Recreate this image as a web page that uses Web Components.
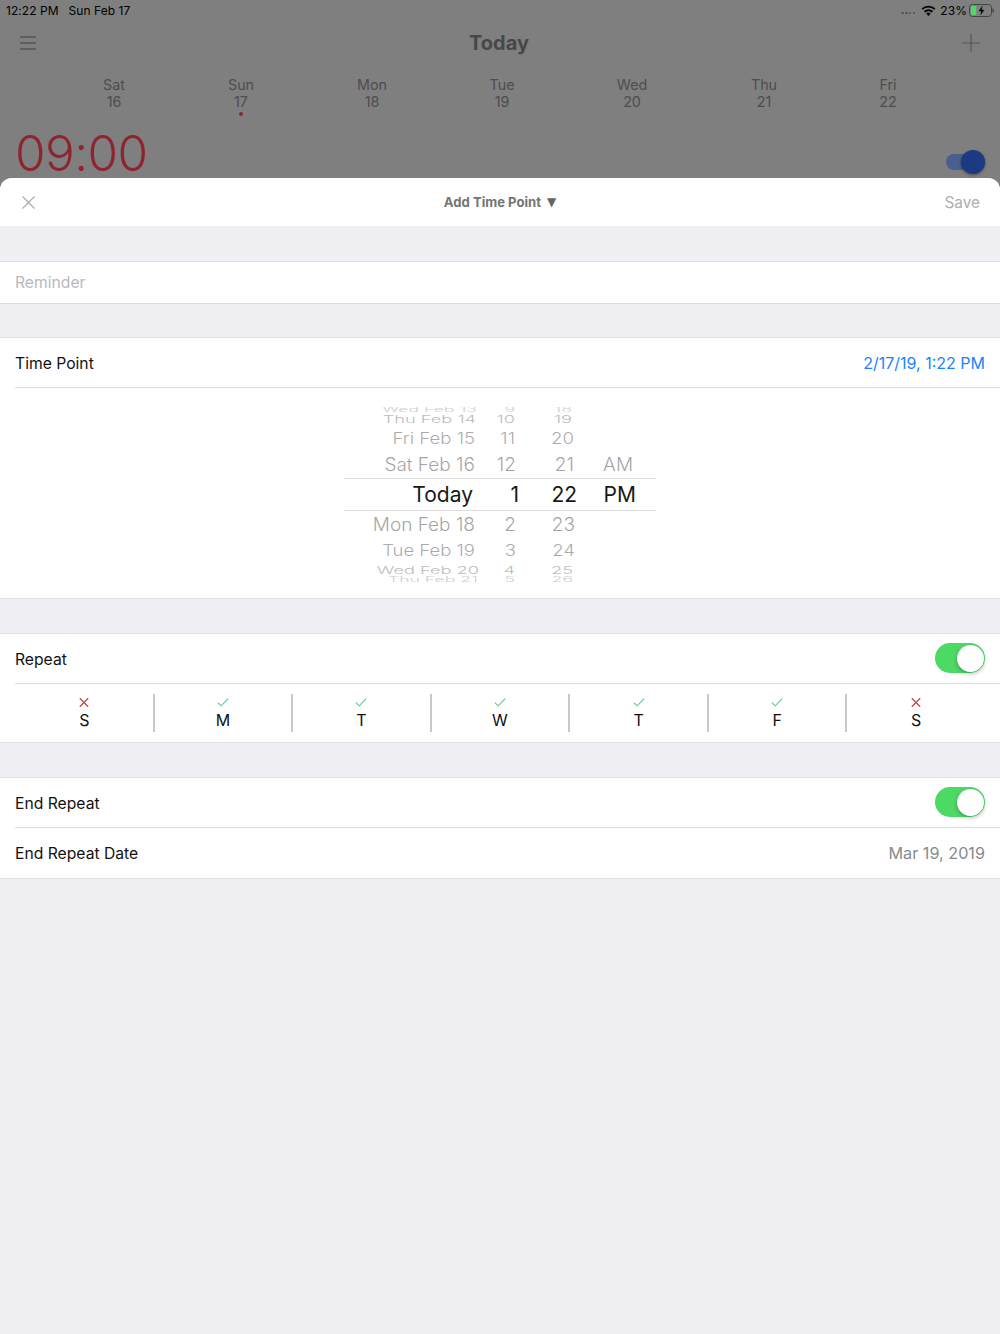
<!DOCTYPE html>
<html lang="en">
<head>
<meta charset="utf-8">
<title>Add Time Point</title>
<style>
html,body{margin:0;padding:0;background:#efeff4;}
body{font-family:Inter,"Liberation Sans",sans-serif;color:#000;}
</style>
</head>
<body>
<app-shell></app-shell>
<script>
function def(name, css, html){
  customElements.define(name, class extends HTMLElement{
    constructor(){super();const s=this.attachShadow({mode:'open'});
      s.innerHTML='<style>'+css+'</style>'+(typeof html==='function'?html(this):html);}
  });
}
def('status-bar',`
:host{display:flex;height:20px;align-items:center;padding:0 6px;font-size:12px;color:#000;letter-spacing:.05px}
.l{display:flex;gap:10px;flex:1}
.r{display:flex;align-items:center}
.d{margin-right:6px;display:flex;gap:1.3px;padding-top:6px}
.d i{width:2.6px;height:2.6px;background:#555;border-radius:50%}
.p{margin:0 2px 0 4px}
svg{display:block}
`,`<div class="l"><span>12:22 PM</span><span>Sun Feb 17</span></div>
<div class="r"><div class="d"><i></i><i></i><i></i><i></i></div>
<svg width="15" height="11" viewBox="0 0 15 11"><path d="M7.5 11 5.3 8.6a3.2 3.2 0 0 1 4.4 0Z" fill="#000"/><path d="M3.6 6.8a5.7 5.7 0 0 1 7.8 0M1.2 4.1a9.2 9.2 0 0 1 12.6 0" fill="none" stroke="#000" stroke-width="1.9"/></svg>
<span class="p">23%</span>
<svg width="25" height="13" viewBox="0 0 25 13"><rect x=".5" y=".5" width="22" height="12" rx="3" fill="none" stroke="#444"/><rect x="2" y="2" width="5.2" height="9" rx="1" fill="#4cd964"/><rect x="23.4" y="4.5" width="1.3" height="4" rx=".6" fill="#444"/><path d="M13.6 1.5 9.6 7.2h2.6l-.8 4.3 4-5.7h-2.6Z" fill="#000"/></svg></div>`);
def('week-col',`:host{display:flex;flex-direction:column;align-items:center;font-size:14.3px;line-height:17px;color:#4d4d4d;position:relative}
i{position:absolute;top:36px;width:4px;height:4px;border-radius:50%;background:#8e2430}`,
e=>`<span>${e.getAttribute('d')}</span><span>${e.getAttribute('n')}</span>${e.hasAttribute('dot')?'<i></i>':''}`);
def('today-backdrop',`
:host{display:block;height:178px;background:#7f7f7f;overflow:hidden}
nav{display:flex;align-items:center;justify-content:space-between;height:46px;padding:0 20px}
h1{margin:0;font-size:20px;font-weight:700;color:#474747}
.week{display:grid;grid-template-columns:128px 126px 136px 124px 136px 128px 120px;padding:10px 0 0 50px;height:35px;margin-bottom:17px}
.t{display:flex;justify-content:space-between;align-items:flex-start;padding:0 15px}
.time{font-size:49.5px;font-weight:300;line-height:50px;color:#8e2430;letter-spacing:-.6px}
.tg{position:relative;width:39px;height:16px;border-radius:8px;background:#4a5f8d;margin-top:26px}
.tg i{position:absolute;right:0;top:-4px;width:24px;height:24px;border-radius:50%;background:#1c3a83;box-shadow:0 1px 3px rgba(0,0,0,.4)}
svg{display:block}
`,`<status-bar></status-bar>
<nav><svg width="16" height="14" viewBox="0 0 16 14"><path d="M0 1h16M0 7h16M0 13h16" stroke="#565656" stroke-width="1.3"/></svg>
<h1>Today</h1>
<svg width="18" height="18" viewBox="0 0 18 18"><path d="M9 0v18M0 9h18" stroke="#565656" stroke-width="1.2"/></svg></nav>
<div class="week"><week-col d="Sat" n="16"></week-col><week-col d="Sun" n="17" dot></week-col><week-col d="Mon" n="18"></week-col><week-col d="Tue" n="19"></week-col><week-col d="Wed" n="20"></week-col><week-col d="Thu" n="21"></week-col><week-col d="Fri" n="22"></week-col></div>
<div class="t"><div class="time">09:00</div><div class="tg"><i></i></div></div>`);
def('sheet-header',`
:host{display:flex;height:48px;align-items:center;justify-content:space-between;background:#fff;padding:0 20px 0 22px;position:relative}
.c{position:absolute;left:0;right:0;text-align:center;font-size:13.1px;font-weight:700;color:#757575;display:flex;justify-content:center;align-items:center;gap:6px}
.c span:last-child{font-family:"DejaVu Sans",sans-serif;font-size:12px;font-weight:400;color:#666}
.s{font-size:15.4px;color:#aeaeae}
svg{display:block}
`,`<svg width="13" height="13" viewBox="0 0 13 13"><path d="M.5.5l12 12M12.5.5l-12 12" stroke="#ababab" stroke-width="1.2"/></svg>
<div class="c"><span>Add Time Point</span><span>▼</span></div><div class="s">Save</div>`);
def('form-section',`:host{display:block;background:#fff;border-top:1px solid #dfdfe3;border-bottom:1px solid #dfdfe3;margin-top:34px}`,`<slot></slot>`);
def('form-row',`
:host{display:flex;align-items:center;justify-content:space-between;padding:0 15px;font-size:15.7px;color:#111;position:relative;box-sizing:border-box}
:host([line])::after{content:"";position:absolute;left:15px;right:0;bottom:0;height:1px;background:#dfdfe3}
`,`<slot></slot><slot name="end"></slot>`);
def('ios-switch',`
:host{display:block;width:50px;height:30px;border-radius:15px;background:#4cd964;position:relative;margin-bottom:2px}
i{position:absolute;right:1.5px;top:1.5px;width:27px;height:27px;border-radius:50%;background:#fff;box-shadow:0 2px 4px rgba(0,0,0,.25)}
`,`<i></i>`);
const rows=[
 {h:6,sy:.4,f:17.6,o:.2,d:['Wed Feb 13',4],c:[['9',5],['18',8],null]},
 {h:13,sy:.58,f:18.2,o:.27,d:['Thu Feb 14',5],c:[['10',5],['19',8],null]},
 {h:24,sy:.84,f:18.6,o:.33,d:['Fri Feb 15',6],c:[['11',5],['20',6],null]},
 {h:28,sy:.96,f:19,o:.36,d:['Sat Feb 16',6],c:[['12',4],['21',6],['AM',23]]},
 {h:33,sy:1,f:21,o:.9,sel:1,d:['Today',8],c:[['1',1],['22',3],['PM',20]]},
 {h:27,sy:.96,f:19,o:.36,d:['Mon Feb 18',6],c:[['2',4],['23',5],null]},
 {h:25,sy:.84,f:18.5,o:.33,d:['Tue Feb 19',6],c:[['3',4],['24',5],null]},
 {h:14,sy:.58,f:18.2,o:.27,d:['Wed Feb 20',2],c:[['4',5],['25',7],null]},
 {h:5,sy:.4,f:17.6,o:.2,d:['Thu Feb 21',3],c:[['5',5],['26',7],null]}
];
def('picker-wheel',`
:host{display:block;height:210px;box-sizing:border-box;padding-top:19px;background:#fff}
.w{width:312px;margin-left:344px;display:flex;flex-direction:column;overflow:hidden}
.r{display:grid;grid-template-columns:137px 39px 60px 76px;grid-template-rows:minmax(0,1fr);align-items:center;color:#000;white-space:nowrap;flex:none}
.r>span{display:block;text-align:right;line-height:1}
.r>span.t{font-weight:300}
.r.sel{border-top:1px solid #dcdcdc;border-bottom:1px solid #dcdcdc;box-sizing:border-box}
.r.sel>span{font-weight:400}
`,()=>`<div class="w">`+rows.map(r=>{
  const st=`transform:scaleY(${r.sy});opacity:${r.o};font-size:${r.f}px;`;
  const cell=c=>c?`<span class="t" style="${st}padding-right:${c[1]}px">${c[0]}</span>`:'<span></span>';
  return `<div class="r${r.sel?' sel':''}" style="height:${r.h}px">${cell(r.d)}${r.c.map(cell).join('')}</div>`;
}).join('')+`</div>`);
def('day-cell',`
:host{display:flex;flex-direction:column;align-items:center;height:38px;font-size:16px;line-height:18px;color:#111;border-right:2px solid #c9c9c9;margin:10px -1px 10px 0;padding-left:1px}
:host([last]){border-right:0;margin-right:0}
svg{display:block;margin:3px 0 3px}
`,e=>{const ok=e.hasAttribute('ok');return (ok?`<svg width="12" height="11" viewBox="0 0 12 11"><path d="M.8 5.6l3.4 3.2L11.2 1.6" fill="none" stroke="#5ac88a" stroke-width="1.1"/></svg>`:`<svg width="12" height="11" viewBox="0 0 12 11"><path d="M1.8 1.2l8.4 8.6M10.2 1.2L1.8 9.8" fill="none" stroke="#c8474f" stroke-width="1.3"/></svg>`)+`<span>${e.getAttribute('l')}</span>`});
def('day-strip',`:host{display:grid;grid-template-columns:repeat(7,1fr);margin:0 15px;height:58px}`,
`<day-cell l="S"></day-cell><day-cell l="M" ok></day-cell><day-cell l="T" ok></day-cell><day-cell l="W" ok></day-cell><day-cell l="T" ok></day-cell><day-cell l="F" ok></day-cell><day-cell l="S" last></day-cell>`);
def('app-shell',`
:host{display:block;width:1000px;height:1334px;background:#7f7f7f;overflow:hidden}
.sheet{background:#efeff4;height:1156px;border-radius:12px 12px 0 0;overflow:hidden;display:flow-root}
.ph{color:#b9b9bd}
.blue{color:#1a84ff;font-size:16px}
.gray{color:#8a8a8e;font-size:16.2px}
`,`<today-backdrop></today-backdrop>
<div class="sheet"><sheet-header></sheet-header>
<form-section style="margin-top:35px"><form-row style="height:41px"><span class="ph">Reminder</span></form-row></form-section>
<form-section style="margin-top:33px"><form-row line style="height:50px">Time Point<span slot="end" class="blue">2/17/19, 1:22 PM</span></form-row><picker-wheel></picker-wheel></form-section>
<form-section><form-row line style="height:50px">Repeat<ios-switch slot="end"></ios-switch></form-row><day-strip></day-strip></form-section>
<form-section><form-row line style="height:50px">End Repeat<ios-switch slot="end"></ios-switch></form-row><form-row style="height:50px">End Repeat Date<span slot="end" class="gray">Mar 19, 2019</span></form-row></form-section>
</div>`);
</script>
</body>
</html>
